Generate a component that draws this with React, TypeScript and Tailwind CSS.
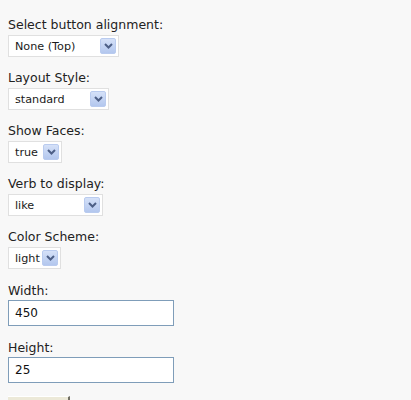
import { ReactNode } from "react";

interface FieldProps {
  label: string;
  children: ReactNode;
  gap: string;
}

interface SelectBoxProps {
  value: string;
  width: string;
}

function Field({ label, children, gap }: FieldProps) {
  return (
    <div className="flex flex-col items-start">
      <div className={`text-[12.5px] leading-[15px] ${gap}`}>{label}</div>
      {children}
    </div>
  );
}

function ArrowButton() {
  return (
    <div className="w-[16px] h-[16px] shrink-0 rounded-[2px] border border-[#b9cbef] bg-gradient-to-b from-[#d5e1f8] to-[#b3c7ee] flex items-center justify-center">
      <svg width="9" height="6" viewBox="0 0 9 6">
        <polyline
          points="1,1 4.5,4.5 8,1"
          fill="none"
          stroke="#4d5f86"
          strokeWidth="2"
        />
      </svg>
    </div>
  );
}

function SelectBox({ value, width }: SelectBoxProps) {
  return (
    <div
      className={`h-[22px] ${width} bg-white border border-[#e0e0e0] flex items-center justify-between pl-[6px] pr-[2px]`}
    >
      <span className="text-[11.2px] leading-[15px] text-[#1a1a1a]">{value}</span>
      <ArrowButton />
    </div>
  );
}

function TextBox({ value }: { value: string }) {
  return (
    <div className="h-[26px] w-[166px] bg-white border border-[#7f9db9] flex items-center pl-[6px]">
      <span className="leading-[15px] text-[#111]">{value}</span>
    </div>
  );
}

export default function App() {
  return (
    <div className="w-[411px] h-[400px] overflow-hidden bg-[#f8f8f8] pl-2 pt-[17px] text-[12px] text-[#222] font-['DejaVu_Sans',sans-serif] flex flex-col gap-[13px]">
      <Field label="Select button alignment:" gap="mb-[3px]">
        <SelectBox value="None (Top)" width="w-[111px]" />
      </Field>
      <Field label="Layout Style:" gap="mb-[3px]">
        <SelectBox value="standard" width="w-[101px]" />
      </Field>
      <Field label="Show Faces:" gap="mb-[3px]">
        <SelectBox value="true" width="w-[54px]" />
      </Field>
      <Field label="Verb to display:" gap="mb-[3px]">
        <SelectBox value="like" width="w-[95px]" />
      </Field>
      <Field label="Color Scheme:" gap="mb-[3px]">
        <SelectBox value="light" width="w-[53px]" />
      </Field>
      <div className="flex flex-col gap-[14px] mt-px">
        <Field label="Width:" gap="mb-[2px]">
          <TextBox value="450" />
        </Field>
        <Field label="Height:" gap="mb-[2px]">
          <TextBox value="25" />
        </Field>
      </div>
      <div className="h-[24px] w-[62px] shrink-0 bg-[#ece9d8] border-t border-t-white border-r-2 border-r-[#716f64]" />
    </div>
  );
}
